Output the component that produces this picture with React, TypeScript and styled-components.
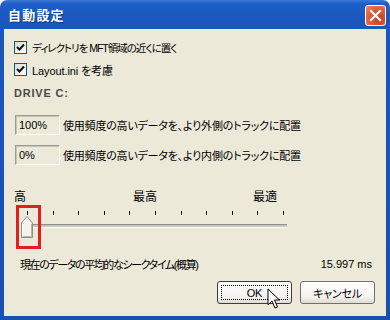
import React from "react";
import styled, { createGlobalStyle } from "styled-components";

const GlobalStyle = createGlobalStyle`
  html, body {
    margin: 0;
    padding: 0;
    overflow: hidden;
    background: #ffffff;
  }
`;

const FONT = `"Liberation Sans", "Noto Sans CJK JP", sans-serif`;

const Window = styled.div`
  position: relative;
  width: 390px;
  height: 320px;
  box-sizing: border-box;
  display: flex;
  flex-direction: column;
  border-radius: 7px 7px 0 0;
  background: linear-gradient(180deg, #3a78d8 0px, #1f5ec8 4px, #1a56bd 22px, #1850b0 100%);
  font-family: ${FONT};
  overflow: hidden;
`;

const TitleBar = styled.div`
  height: 29px;
  flex: none;
  display: flex;
  align-items: center;
  justify-content: space-between;
  padding: 0 4px 0 8px;
  box-sizing: border-box;
`;

const Title = styled.span`
  color: #ffffff;
  font-size: 13px;
  font-weight: bold;
  letter-spacing: 1.2px;
  text-shadow: 1px 1px 0 #0c3a8a;
`;

const CloseButton = styled.div`
  width: 21px;
  height: 21px;
  border: 1px solid #ffffff;
  border-radius: 3px;
  box-sizing: border-box;
  background: radial-gradient(circle at 70% 70%, #c9401f 0%, #e2603a 60%, #ee8a68 100%);
  display: flex;
  align-items: center;
  justify-content: center;
  margin-top: 2px;
`;

const Body = styled.div`
  flex: 1;
  margin: 0 4px 4px 4px;
  background: #ece9d8;
  display: flex;
  flex-direction: column;
  padding: 11px 14px 0 10px;
  box-sizing: border-box;
  position: relative;
  font-size: 11px;
  color: #000000;
  font-feature-settings: "palt";
`;

const CheckRow = styled.label<{ $top: number; $spacing: number; $size?: number }>`
  display: flex;
  align-items: center;
  gap: 5px;
  height: 15px;
  margin-top: ${(p) => p.$top}px;
  font-size: ${(p) => p.$size ?? 11}px;
  letter-spacing: ${(p) => p.$spacing}px;
`;

const CheckBox = styled.span`
  width: 13px;
  height: 13px;
  box-sizing: border-box;
  border: 1px solid #1c5180;
  background: linear-gradient(135deg, #dcdbd5, #ffffff);
  display: flex;
  align-items: center;
  justify-content: center;
  flex: none;
`;

const SectionLabel = styled.div`
  margin-top: 9px;
  height: 14px;
  line-height: 14px;
  font-weight: bold;
  color: #4a4a4a;
  letter-spacing: 0.8px;
`;

const PercentRow = styled.div<{ $top: number }>`
  display: flex;
  align-items: center;
  gap: 3px;
  margin-top: ${(p) => p.$top}px;
  padding-left: 1px;
  letter-spacing: -0.2px;
`;

const PercentBox = styled.div`
  width: 45px;
  height: 20px;
  box-sizing: border-box;
  border-top: 1px solid #9c9b96;
  border-left: 1px solid #9c9b96;
  border-right: 1px solid #ffffff;
  border-bottom: 1px solid #ffffff;
  box-shadow: inset 1px 1px 0 #c9c6b8;
  display: flex;
  align-items: center;
  padding-left: 3px;
  letter-spacing: 0;
  flex: none;
`;

const SliderArea = styled.div`
  position: relative;
  margin-top: 25px;
  display: flex;
  flex-direction: column;
`;

const LabelRow = styled.div`
  display: flex;
  height: 14px;
  line-height: 14px;
  font-size: 12px;
`;

const SliderLabel = styled.span<{ $left: number }>`
  margin-left: ${(p) => p.$left}px;
`;

const TickRow = styled.div`
  display: flex;
  justify-content: space-between;
  width: 257px;
  margin: 7px 0 0 13px;
  height: 4px;
`;

const Tick = styled.span`
  width: 1px;
  height: 4px;
  background: #000000;
`;

const Track = styled.div`
  width: 257px;
  height: 4px;
  margin: 9px 0 0 16px;
  box-sizing: border-box;
  border-top: 1px solid #8e8d88;
  border-bottom: 1px solid #ffffff;
  background: #c8c6bd;
`;

const Thumb = styled.div`
  position: absolute;
  left: 7px;
  top: 26px;
  width: 12px;
  height: 22px;
`;

const Marker = styled.div`
  position: absolute;
  left: 2px;
  top: 15px;
  width: 25px;
  height: 44px;
  box-sizing: border-box;
  border: 3px solid #e0201c;
`;

const SeekRow = styled.div`
  display: flex;
  justify-content: space-between;
  align-items: center;
  margin-top: 29px;
  padding-left: 6px;
  height: 14px;
`;

const SeekText = styled.span`
  letter-spacing: -1.4px;
`;

const SeekValue = styled.span`
  letter-spacing: 0;
  font-size: 11px;
`;

const ButtonRow = styled.div`
  display: flex;
  justify-content: flex-end;
  gap: 8px;
  margin: 10px -3px 0 0;
`;

const Button = styled.div<{ $focused?: boolean }>`
  position: relative;
  width: 75px;
  height: 23px;
  box-sizing: border-box;
  border: 1px solid ${(p) => (p.$focused ? "#3c3c3c" : "#6f6f6f")};
  border-radius: 3px;
  background: linear-gradient(180deg, #ffffff 0%, #f4f3ee 70%, #dedcd2 100%);
  display: flex;
  align-items: center;
  justify-content: center;
  font-size: 11px;
  letter-spacing: -0.2px;
  &::after {
    content: "";
    display: ${(p) => (p.$focused ? "block" : "none")};
    position: absolute;
    inset: 3px;
    border: 1px dotted #000000;
  }
`;

const Cursor = styled.svg`
  position: absolute;
  left: 263px;
  top: 259px;
`;

export default function App() {
  const ticks = Array.from({ length: 11 });

  return (
    <>
      <GlobalStyle />
      <Window>
        <TitleBar>
          <Title>自動設定</Title>
          <CloseButton>
            <svg width="13" height="13" viewBox="0 0 13 13">
              <path d="M2 2 L11 11 M11 2 L2 11" stroke="#ffffff" strokeWidth="2.2" strokeLinecap="square" />
            </svg>
          </CloseButton>
        </TitleBar>
        <Body>
          <CheckRow $top={0} $spacing={-1} $size={10.5}>
            <CheckBox>
              <svg width="9" height="9" viewBox="0 0 9 9">
                <path d="M1 4 L3.5 6.5 L8 1.5" fill="none" stroke="#111111" strokeWidth="2" />
              </svg>
            </CheckBox>
            ディレクトリを MFT領域の近くに置く
          </CheckRow>
          <CheckRow $top={7} $spacing={-0.1}>
            <CheckBox>
              <svg width="9" height="9" viewBox="0 0 9 9">
                <path d="M1 4 L3.5 6.5 L8 1.5" fill="none" stroke="#111111" strokeWidth="2" />
              </svg>
            </CheckBox>
            Layout.ini を考慮
          </CheckRow>
          <SectionLabel>DRIVE C:</SectionLabel>
          <PercentRow $top={15}>
            <PercentBox>100%</PercentBox>
            使用頻度の高いデータを、より外側のトラックに配置
          </PercentRow>
          <PercentRow $top={10}>
            <PercentBox>0%</PercentBox>
            使用頻度の高いデータを、より内側のトラックに配置
          </PercentRow>
          <SliderArea>
            <LabelRow>
              <SliderLabel $left={0}>高</SliderLabel>
              <SliderLabel $left={107}>最高</SliderLabel>
              <SliderLabel $left={96}>最適</SliderLabel>
            </LabelRow>
            <TickRow>
              {ticks.map((_, i) => (
                <Tick key={i} />
              ))}
            </TickRow>
            <Track />
            <Thumb>
              <svg width="12" height="22" viewBox="0 0 12 22">
                <path d="M0.5 7 L6 0.5 L11.5 7 L11.5 21.5 L0.5 21.5 Z" fill="#f4f3ee" stroke="#8f8e88" />
                <path d="M1.5 7.5 L6 2 M1.5 7.5 L1.5 20.5" stroke="#ffffff" />
                <path d="M10.5 8 L10.5 20.5 L1.5 20.5" stroke="#b5b3aa" fill="none" />
              </svg>
            </Thumb>
            <Marker />
          </SliderArea>
          <SeekRow>
            <SeekText>現在のデータの平均的なシークタイム(概算)</SeekText>
            <SeekValue>15.997 ms</SeekValue>
          </SeekRow>
          <ButtonRow>
            <Button $focused>OK</Button>
            <Button>キャンセル</Button>
          </ButtonRow>
          <Cursor width="14" height="22" viewBox="0 0 14 22">
            <path d="M1 1 L1 17 L5 13 L8 20 L10.5 19 L7.5 12 L12.5 12 Z" fill="#ffffff" stroke="#000000" strokeWidth="1" strokeLinejoin="miter" />
          </Cursor>
        </Body>
      </Window>
    </>
  );
}
